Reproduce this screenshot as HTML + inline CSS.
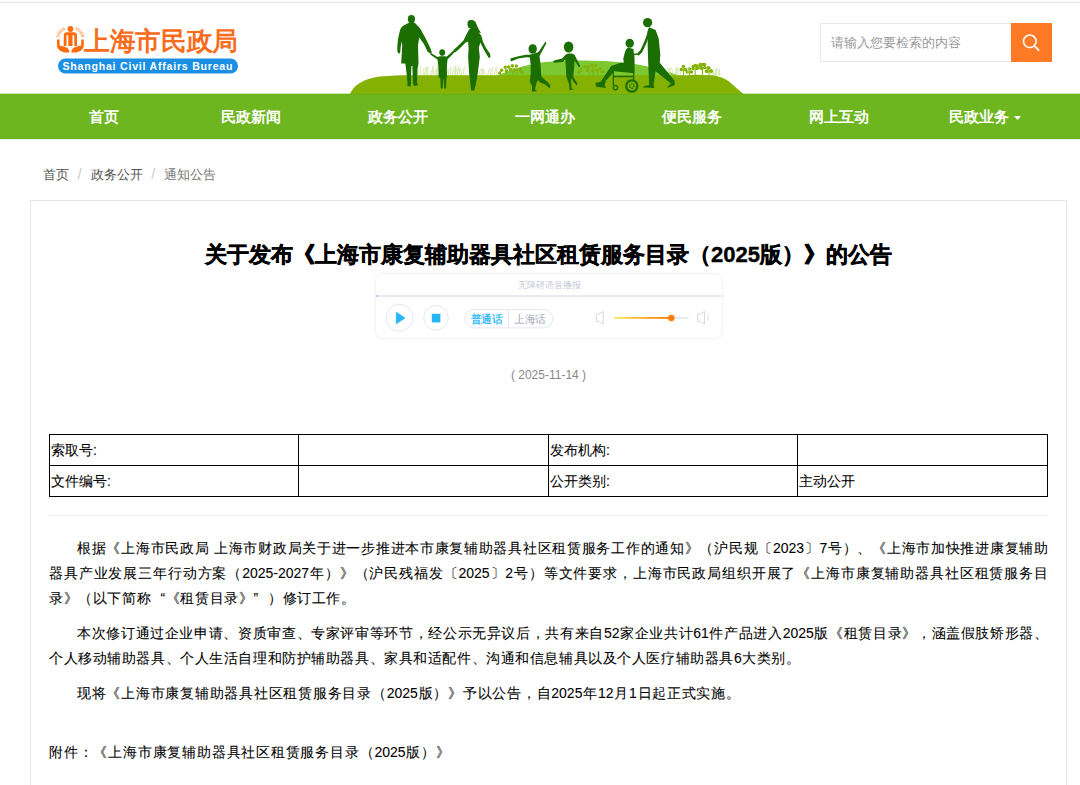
<!DOCTYPE html>
<html><head><meta charset="utf-8">
<style>
*{margin:0;padding:0;box-sizing:border-box}
html,body{width:1080px;height:785px;overflow:hidden;background:#fff}
body{position:relative;font-family:"Liberation Sans",sans-serif;color:#333}
.abs{position:absolute}
#topline{left:0;top:1px;width:1080px;height:1px;background:#f8f8f8}
#topline2{left:0;top:2px;width:1080px;height:1px;background:#e6e6e6}
#nav{left:0;top:94px;width:1080px;height:45px;background:#6eb61f;border-top:1px solid #67b217;border-bottom:1px solid #66b116;box-shadow:0 -1px 0 rgba(110,182,31,0.35),0 1px 0 rgba(110,182,31,0.12)}
.ni{position:absolute;top:-1px;height:45px;line-height:46px;width:147px;text-align:center;color:#fff;font-size:15px;font-weight:bold}
#search{left:820px;top:23px;width:192px;height:39px;border:1px solid #eaeaea;border-right:none}
#search span{position:absolute;left:9.5px;top:0.5px;line-height:37px;font-size:12.5px;color:#999}
#sbtn{left:1011px;top:23px;width:41px;height:39px;background:#ff7a26}
#crumb{left:43px;top:166px;font-size:12.6px;color:#555;line-height:16px;white-space:nowrap}
#crumb .sep{color:#c8c8c8;display:inline-block;width:21.5px;text-align:center;font-size:14px}
#crumb .cur{color:#777}
#box{left:30px;top:200px;width:1037px;height:600px;border:1px solid #e6e6e6}
#title{left:0;top:239.5px;width:1097px;text-align:center;font-size:22px;font-weight:bold;color:#000;-webkit-text-stroke:0.4px #000;line-height:30px;white-space:nowrap}
#date{left:0;top:366px;width:1097px;text-align:center;font-size:12px;color:#888;line-height:18px}
table{position:absolute;left:49px;top:434px;border-collapse:collapse;width:999px}
td{border:1px solid #000;height:31px;font-size:14px;color:#000;padding:1px 0 0 1px;vertical-align:middle;-webkit-text-stroke:0.08px #000}
#hr{left:49px;top:515px;width:999px;height:1px;background:#eee}
.ln{position:absolute;left:49px;width:999px;font-size:14px;color:#000;line-height:25px;white-space:nowrap;-webkit-text-stroke:0.08px #000}
.j{text-align:justify;text-align-last:justify}
.ql{display:inline-block;width:14px;text-align:right;text-align-last:right}
.qr{display:inline-block;width:14px;text-align:left;text-align-last:left}
#player{left:376px;top:274px;width:346px;height:64px;border-radius:7px;background:#fff;box-shadow:0 0 3px rgba(0,0,20,0.12)}
#phead{position:absolute;left:0;top:0;width:346px;height:23px;border-bottom:2px solid #e8eaf4;text-align:center;font-size:9px;line-height:22px;color:#c5c8d6}
.caret{display:inline-block;width:0;height:0;border-left:3.5px solid transparent;border-right:3.5px solid transparent;border-top:4px solid #fff;margin-left:6px;vertical-align:middle;position:relative;top:0px}
</style></head><body>
<div class="abs" id="topline"></div>
<div class="abs" id="topline2"></div>

<svg class="abs" style="left:0;top:0" width="260" height="90" viewBox="0 0 260 90">
 <g fill="#ff6a0a">
  <circle cx="70.4" cy="29" r="2.9"/>
  <path d="M63.8 46 V35.4 Q63.8 32.3 67 32.3 H73.8 Q77 32.3 77 35.4 V46 H74.3 V35.3 H72.5 V46 H68.3 V35.3 H66.5 V46 Z"/>
  <path d="M57 40 Q57.8 39.2 58.6 39.3 Q59.6 39.6 59.6 41 L59.7 45.6 Q64 46.3 67.6 48 Q69.3 49.6 69.4 52.6 L64.5 52.6 Q60 51.6 57.7 48.2 Q57 46.6 57 45 Z"/>
  <path transform="translate(140.8 0) scale(-1 1)" d="M57 40 Q57.8 39.2 58.6 39.3 Q59.6 39.6 59.6 41 L59.7 45.6 Q64 46.3 67.6 48 Q69.3 49.6 69.4 52.6 L64.5 52.6 Q60 51.6 57.7 48.2 Q57 46.6 57 45 Z"/>
 </g>
 <g fill="none" stroke="#ff9d5c" stroke-width="3" stroke-dasharray="0.8 0.7">
  <path d="M57.6 37.2 A13.2 13.2 0 0 1 64.8 28.4"/>
  <path d="M76 28.4 A13.2 13.2 0 0 1 83.2 37.2"/>
 </g>
 <text x="84" y="49.8" font-size="25.5" fill="#f86c1c" font-weight="bold" textLength="154" lengthAdjust="spacingAndGlyphs">上海市民政局</text>
 <rect x="58" y="58.5" width="180" height="15" rx="7.5" fill="#1a8fe3"/>
 <text x="62.5" y="70" font-size="10.6" fill="#fff" font-weight="bold" textLength="170" lengthAdjust="spacing" font-family="Liberation Sans">Shanghai  Civil  Affairs  Bureau</text>
</svg>

<svg class="abs" style="left:340px;top:10px" width="420" height="84" viewBox="340 10 420 84">
 <path fill="#7cc832" d="M496 76 C510 70 525 64.5 545 62 C565 60 600 59.5 628 63 C645 65.5 660 69 681 76 Z"/>
 <g fill="#84b102"><circle cx="505.3" cy="67.3" r="1.7"/><circle cx="508.7" cy="67" r="1.7"/><circle cx="512.3" cy="65.7" r="1.7"/><circle cx="516.3" cy="66" r="1.7"/><circle cx="501.7" cy="70.3" r="1.7"/><circle cx="506.3" cy="71" r="1.7"/><circle cx="520.3" cy="69.7" r="1.7"/><circle cx="522" cy="72.3" r="1.7"/><circle cx="499.7" cy="73" r="1.7"/><circle cx="510.5" cy="69.5" r="1.7"/><circle cx="514.5" cy="70" r="1.7"/><circle cx="584.6" cy="67.1" r="1.7"/><circle cx="588" cy="66.7" r="1.7"/><circle cx="592" cy="64.9" r="1.7"/><circle cx="595.7" cy="65.6" r="1.7"/><circle cx="580.9" cy="70" r="1.7"/><circle cx="587.6" cy="70.4" r="1.7"/><circle cx="600.1" cy="68.6" r="1.7"/><circle cx="602.7" cy="71.6" r="1.7"/><circle cx="578.7" cy="72.3" r="1.7"/><circle cx="592.7" cy="70.8" r="1.7"/><circle cx="597" cy="70" r="1.7"/><path d="M507 69 L507 76 M513 67 L513 76 M517 68 L517 76 M589 68 L589 76 M593 66 L593 76 M598 69 L598 76" stroke="#84b102" stroke-width="0.9"/></g>
 <g stroke="#cbe298" stroke-width="0.75" fill="none">
  <path d="M415.7 76 Q415.5 70.9 415.1 67.6 M417.8 76 Q417.2 70.7 415.6 67.2 M418.9 76 Q418.6 70.1 417.7 66.2 M420.9 76 Q420.8 69.7 420.7 65.5 M423.2 76 Q423.4 71.1 423.9 67.9 M424.2 76 Q424.8 70.7 426.1 67.1 M426.3 76 Q426.6 70.4 427.2 66.7 M427.6 76 Q427.7 70.4 428.0 66.6 M429.8 76 Q430.3 72.3 431.6 69.9 M431.6 76 Q432.1 70.5 433.5 66.8 M433.4 76 Q433.3 69.9 432.9 65.9 M435.1 76 Q435.8 71.2 437.3 68.0 M436.8 76 Q436.2 72.1 435.0 69.6 M437.7 76 Q437.6 69.8 437.4 65.7 M447.1 76 Q447.1 71.6 447.2 68.6 M448.5 76 Q448.6 71.5 448.9 68.4 M450.3 76 Q450.6 70.0 451.2 65.9 M452.2 76 Q453.0 70.1 454.7 66.1 M453.6 76 Q454.1 72.0 455.4 69.3 M455.5 76 Q455.6 70.0 455.8 65.9 M456.8 76 Q457.3 71.8 458.5 69.0 M458.3 76 Q457.6 71.6 456.1 68.7 M460.2 76 Q459.5 69.7 458.1 65.5 M461.7 76 Q461.2 71.3 460.0 68.2 M462.8 76 Q463.4 70.3 464.7 66.5 M476.5 76 Q475.9 70.7 474.3 67.2 M478.9 76 Q479.5 71.5 480.8 68.5 M480.8 76 Q481.6 71.0 483.3 67.7 M481.8 76 Q482.0 72.2 482.3 69.7 M483.2 76 Q483.1 71.9 482.7 69.1 M485.4 76 Q484.8 72.0 483.2 69.3 M487.4 76 Q488.1 71.6 489.7 68.6 M490.4 76 Q490.3 71.4 490.2 68.3 M492.0 76 Q492.2 70.7 492.5 67.1 M494.1 76 Q494.7 70.7 496.3 67.2 M496.0 76 Q496.3 71.2 497.1 68.1 M667.7 76 Q668.5 71.6 670.1 68.6 M669.7 76 Q669.0 70.9 667.3 67.5 M671.3 76 Q670.6 70.8 668.9 67.4 M673.3 76 Q672.6 70.7 671.1 67.2 M675.0 76 Q675.3 71.1 675.9 67.9 M676.4 76 Q676.8 70.5 677.6 66.8 M677.8 76 Q678.1 72.2 678.7 69.7 M680.5 76 Q680.4 71.7 680.2 68.9 M712.1 76 Q711.9 71.5 711.4 68.6 M713.4 76 Q713.6 71.4 713.9 68.3 M715.0 76 Q715.4 71.4 716.4 68.3 M716.3 76 Q716.7 70.9 717.5 67.4 M718.2 76 Q718.7 71.8 719.7 69.0 M719.7 76 Q719.6 71.9 719.4 69.2"/>
 </g>
 <path fill="#84b102" d="M349.5 95 C353 86 362 79 380 76.5 C390 75.6 400 75.4 410 75.3 L712 75.2 C722 76.5 728 80 733 85 C737 88.5 740 91 744.5 95 Z"/>
 <g fill="#84b102"><circle cx="683.4" cy="66.6" r="1.75"/><circle cx="681.3" cy="69.5" r="1.75"/><circle cx="685.5" cy="69.5" r="1.75"/><circle cx="689.4" cy="69.1" r="1.75"/><circle cx="687.3" cy="72" r="1.75"/><circle cx="691.5" cy="72" r="1.75"/><circle cx="695.2" cy="65.6" r="1.75"/><circle cx="693.1" cy="68.5" r="1.75"/><circle cx="697.3000000000001" cy="68.5" r="1.75"/><circle cx="702.6" cy="64.6" r="1.75"/><circle cx="700.5" cy="67.5" r="1.75"/><circle cx="704.7" cy="67.5" r="1.75"/><circle cx="708.9" cy="68.1" r="1.75"/><circle cx="706.8" cy="71" r="1.75"/><circle cx="711.0" cy="71" r="1.75"/><circle cx="693.3" cy="66.4" r="1.75"/><circle cx="697.2" cy="66" r="1.75"/><circle cx="700.3" cy="64.4" r="1.75"/><circle cx="704.6" cy="64.6" r="1.75"/><circle cx="701.8" cy="68.5" r="1.75"/><circle cx="708.1" cy="68.1" r="1.75"/><circle cx="706.5" cy="71.6" r="1.75"/><circle cx="711.2" cy="71.2" r="1.75"/><path d="M683.4 68.5 L683.4 76 M689.4 71 L689.4 76 M695.2 67.5 L695.2 76 M702.6 66.5 L702.6 76 M708.9 70 L708.9 76" stroke="#84b102" stroke-width="1"/><path d="M686 76 Q697 73.5 711 76Z"/></g><path d="M687 76 L690 63 M678 76 L676 68 M714 76 L716 69" stroke="#cfe3a0" stroke-width="0.6" fill="none"/>
 <g fill="#1a6e02">
  <ellipse cx="411.4" cy="19.1" rx="3.6" ry="4.2"/>
  <path d="M409.4 22.5 L403.2 25.8 C401 27.5 400 29.5 399.7 31.4 L398.1 38.5 L397.4 45.6 L397.3 51.2 L398.7 53.8 L400.2 52.7 L400.7 46.6 L401.7 41.5 L402.2 45.6 L401.2 63.4 L405.3 63.4 L406.8 75.2 L407.6 83.8 L407.2 85.9 L410.9 86.4 L410.9 82.3 L411.4 66 L412.4 66 L412.9 82.3 L414 85.9 L418 85.3 L417 82.3 L417.5 69 L418.5 63.4 L418 45.6 L419.2 37.5 L423.6 43.6 L427.7 51.7 L430.7 53.8 L431.8 52.2 L430.2 47.7 L425.7 38.5 L420.6 29.3 C419 27 417 25 414.4 22.5 Z"/>
  <ellipse cx="442.2" cy="52.6" rx="2.9" ry="3.3"/>
  <path d="M440 56.3 L437.5 57 L431 53 L430.2 54.5 L437.5 59.5 L438.3 66 L438.6 77.2 L440.4 78 L440.8 88.4 L442.8 88.4 L443.3 79 L443.8 79 L444.2 88.4 L446 88.4 L446.4 78 L446.9 77.2 L446.9 66 L447.5 59.5 L454.8 52 L453.6 50.5 L446.8 56.5 L444.5 56.3 Z"/>
  <ellipse cx="471.3" cy="24.2" rx="3.8" ry="4.2"/>
  <path d="M467.5 22 C469 19.8 473.5 19.5 475.5 22 C477 25.5 478.5 29.5 481 33 L477.5 32.5 L471 29.5 Z"/>
  <path d="M469.6 28.8 L466.6 33.9 L463.5 40.5 L457.4 46.6 L453.8 49.7 L453.3 51.7 L455.4 52.2 L460.5 47.7 L465.6 42.6 L468.1 41.5 L468.6 48.7 L468.1 56.8 L469.1 73.1 L470.7 86.4 L471.2 90.4 L474.2 90.4 L475.7 85.3 L477.8 73.1 L479.8 56.8 L478.8 47.7 L480.3 42.6 L483.9 49.7 L488 56.8 L489 58.3 L490.5 56.8 L490 53.8 L485.9 47.7 L482.9 41.5 L481.3 35.4 L477.8 31.4 L472.2 28.8 Z"/>
  <ellipse cx="532.7" cy="49" rx="4.2" ry="4.8"/>
  <path d="M529 54.8 L525.7 54.8 L517.4 56.5 L510.4 58.6 L510.8 61.5 L518.3 58.6 L526.5 57.3 L529.8 57.5 L530.7 64.8 L530.7 73.1 L529.8 81.3 L532 86 L532 90 L531.5 91.5 L537.3 91.3 L535 89.5 L536.5 83 L538 80 L539.8 82.2 L545.6 84.7 L548.1 87.1 L549.7 88.5 L550.5 85.5 L547.5 82 L545.6 80.5 L541.4 76.4 L540.6 64.8 L539.5 56 L546.4 43.3 L545.6 41.6 L538.5 52 C537 52.5 535 53.5 533 54 Z"/>
  <ellipse cx="568.6" cy="47" rx="4.8" ry="5.6"/>
  <path d="M565.5 54.8 L562.1 58.6 L554.7 60.2 L553 61.5 L553.9 62.7 L563 61.9 L565.2 59.5 L565.9 67.3 L566.3 76.4 L569 84 L569.5 88.5 L568.8 89.8 L573.7 90 L571.5 88 L571 80 L572 78 L573.2 81.5 L575.5 84 L576.5 85.5 L577.5 83.5 L575.5 80.5 L573.2 76.4 L574.2 67.3 L574.6 60.6 L576.2 63.1 L578.7 67.3 L580.4 66.4 L577.9 61.5 L575.4 56.5 L574.6 54.8 C572 53 568 53 565.5 54.8 Z"/>
  <ellipse cx="629.7" cy="43.3" rx="4.2" ry="4.5"/>
  <path d="M628.1 47.5 L633.4 49 L634.4 58.5 L634.4 73.3 L614.3 71.2 L605.9 80.7 L604.8 85 L605.9 88.1 L596.3 86.8 L595.3 82.9 L600.6 81.8 L611.2 65.9 L620.7 62.8 L623.8 62.8 L623.3 58.5 L624.9 52.2 C625.5 50 626.5 48.5 628.1 47.5 Z"/>
  <ellipse cx="647.6" cy="22.6" rx="4.6" ry="4.7"/>
  <path d="M649.2 27.3 L655.6 30 L658.7 38.4 L660.3 54.3 L659.8 62.8 L674.6 80.7 L674.8 85 L667.2 88.1 L668.3 86 L671 83.5 L655.6 71.2 L653.5 85 L654.5 88.1 L642.9 87.6 L644.5 86 L649.2 85 L648.2 62.8 L647.8 50 L647.6 40 L647.6 33.2 C647.6 30.5 648 29 649.2 27.3 Z"/>
  <path d="M648.3 30 C646.5 36 644 43 640.5 50 L637.4 53.2 L638.4 55.8 L642 52.4 C645.2 46.5 647.8 40 649.8 33.5 Z"/>
 </g>
 <g stroke="#1a6e02" fill="none">
  <path stroke-width="1.3" d="M613.3 72 L613.3 85 M613.3 76.5 L633 76.5 M633.6 54 L633.6 80 M633.6 54.5 L638.5 54"/>
  <circle cx="615.4" cy="87.6" r="2.2" stroke-width="1.4"/>
  <circle cx="631.8" cy="86" r="5.6" stroke-width="2.2"/>
  <circle cx="631.8" cy="86" r="2.2" stroke-width="1.5" stroke-dasharray="1.2 1"/>
 </g>
</svg>


<div class="abs" id="nav">
  <div class="ni" style="left:30px">首页</div>
  <div class="ni" style="left:177px">民政新闻</div>
  <div class="ni" style="left:324px">政务公开</div>
  <div class="ni" style="left:471px">一网通办</div>
  <div class="ni" style="left:618px">便民服务</div>
  <div class="ni" style="left:765px">网上互动</div>
  <div class="ni" style="left:905px">民政业务</div>
  <svg style="position:absolute;left:1014px;top:20.5px" width="7" height="4" viewBox="0 0 7 4"><path d="M0 0H7L3.5 4Z" fill="#fff"/></svg>
</div>

<div class="abs" id="search"><span>请输入您要检索的内容</span></div>
<div class="abs" id="sbtn"></div>
<svg class="abs" style="left:1011px;top:23px" width="41" height="39" viewBox="1011 23 41 39">
 <circle cx="1029.8" cy="41.3" r="6.3" fill="none" stroke="#fff" stroke-width="1.6"/>
 <path d="M1034.3 45.8 L1038.5 50" stroke="#fff" stroke-width="1.8" stroke-linecap="round"/>
</svg>

<div class="abs" id="crumb">首页<span class="sep">/</span>政务公开<span class="sep">/</span><span class="cur">通知公告</span></div>

<div class="abs" id="box"></div>
<div class="abs" id="title">关于发布《上海市康复辅助器具社区租赁服务目录（2025版）》的公告</div>

<div class="abs" id="player">
  <div id="phead">无障碍语音播报</div><div style="position:absolute;left:0;top:21px;width:2px;height:2px;background:#9fd8f7"></div>
</div>
<svg class="abs" style="left:375px;top:274px" width="348" height="65" viewBox="375 274 348 65">
 <circle cx="399.5" cy="317.8" r="13.5" fill="#fff" stroke="#e4e7f0" stroke-width="1"/>
 <path d="M396.3 312.2 L405 318 L396.3 323.8 Z" fill="#26b6f6" stroke="#26b6f6" stroke-width="0.8" stroke-linejoin="round"/>
 <circle cx="436" cy="317.8" r="12.3" fill="#fff" stroke="#e4e7f0" stroke-width="1"/>
 <rect x="431.8" y="313.8" width="8.6" height="8.6" fill="#26b6f6"/>
 <rect x="464.8" y="309.5" width="88" height="18.4" rx="9.2" fill="#fff" stroke="#e4e7f0" stroke-width="1"/>
 <line x1="508.6" y1="310" x2="508.6" y2="327.5" stroke="#e4e7f0" stroke-width="1"/>
 <text x="470.6" y="323" font-size="11" fill="#1db4f6" stroke="#1db4f6" stroke-width="0.25" textLength="32" lengthAdjust="spacingAndGlyphs">普通话</text>
 <text x="514" y="323" font-size="11" fill="#9fa3b3" textLength="32" lengthAdjust="spacingAndGlyphs">上海话</text>
 <g fill="none" stroke="#d6d9e2" stroke-width="1" stroke-linejoin="round">
  <path d="M596.3 314.2 H598.8 L603.2 311.4 V324.2 L598.8 321.4 H596.3 Z"/>
  <path d="M697.6 314.2 H700.1 L704.5 311.4 V324.2 L700.1 321.4 H697.6 Z"/>
  <path d="M707.4 315 Q710.2 317.8 707.4 320.6"/>
 </g>
 <defs><linearGradient id="vg" x1="0" x2="1"><stop offset="0" stop-color="#ffe65c"/><stop offset="1" stop-color="#ff7500"/></linearGradient></defs>
 <rect x="671" y="317" width="17.5" height="1.8" fill="#e4e7f0"/>
 <rect x="614" y="317" width="57.5" height="1.8" fill="url(#vg)"/>
 <circle cx="671.3" cy="317.9" r="4" fill="#ff7a10" opacity="0.25"/>
 <circle cx="671.3" cy="317.9" r="3" fill="#ff7a00"/>
</svg>
<div class="abs" id="date">( 2025-11-14 )</div>

<table>
<tr><td style="width:249px">索取号:</td><td style="width:250px"></td><td style="width:249px">发布机构:</td><td></td></tr>
<tr><td>文件编号:</td><td></td><td>公开类别:</td><td>主动公开</td></tr>
</table>
<div class="abs" id="hr"></div>

<div class="ln j" style="top:536px;padding-left:28px">根据《上海市民政局 上海市财政局关于进一步推进本市康复辅助器具社区租赁服务工作的通知》（沪民规〔2023〕7号）、《上海市加快推进康复辅助</div>
<div class="ln j" style="top:561px">器具产业发展三年行动方案（2025-2027年）》（沪民残福发〔2025〕2号）等文件要求，上海市民政局组织开展了《上海市康复辅助器具社区租赁服务目</div>
<div class="ln j" style="top:586px;width:306px">录》（以下简称<span class="ql">“</span>《租赁目录》<span class="qr">”</span>）修订工作。</div>
<div class="ln j" style="top:621px;padding-left:28px">本次修订通过企业申请、资质审查、专家评审等环节，经公示无异议后，共有来自52家企业共计61件产品进入2025版《租赁目录》，涵盖假肢矫形器、</div>
<div class="ln j" style="top:646px;width:751px">个人移动辅助器具、个人生活自理和防护辅助器具、家具和适配件、沟通和信息辅具以及个人医疗辅助器具6大类别。</div>
<div class="ln j" style="top:681px;padding-left:28px;width:691px">现将《上海市康复辅助器具社区租赁服务目录（2025版）》予以公告，自2025年12月1日起正式实施。</div>
<div class="ln j" style="top:740px;width:401px">附件：《上海市康复辅助器具社区租赁服务目录（2025版）》</div>

</body></html>
